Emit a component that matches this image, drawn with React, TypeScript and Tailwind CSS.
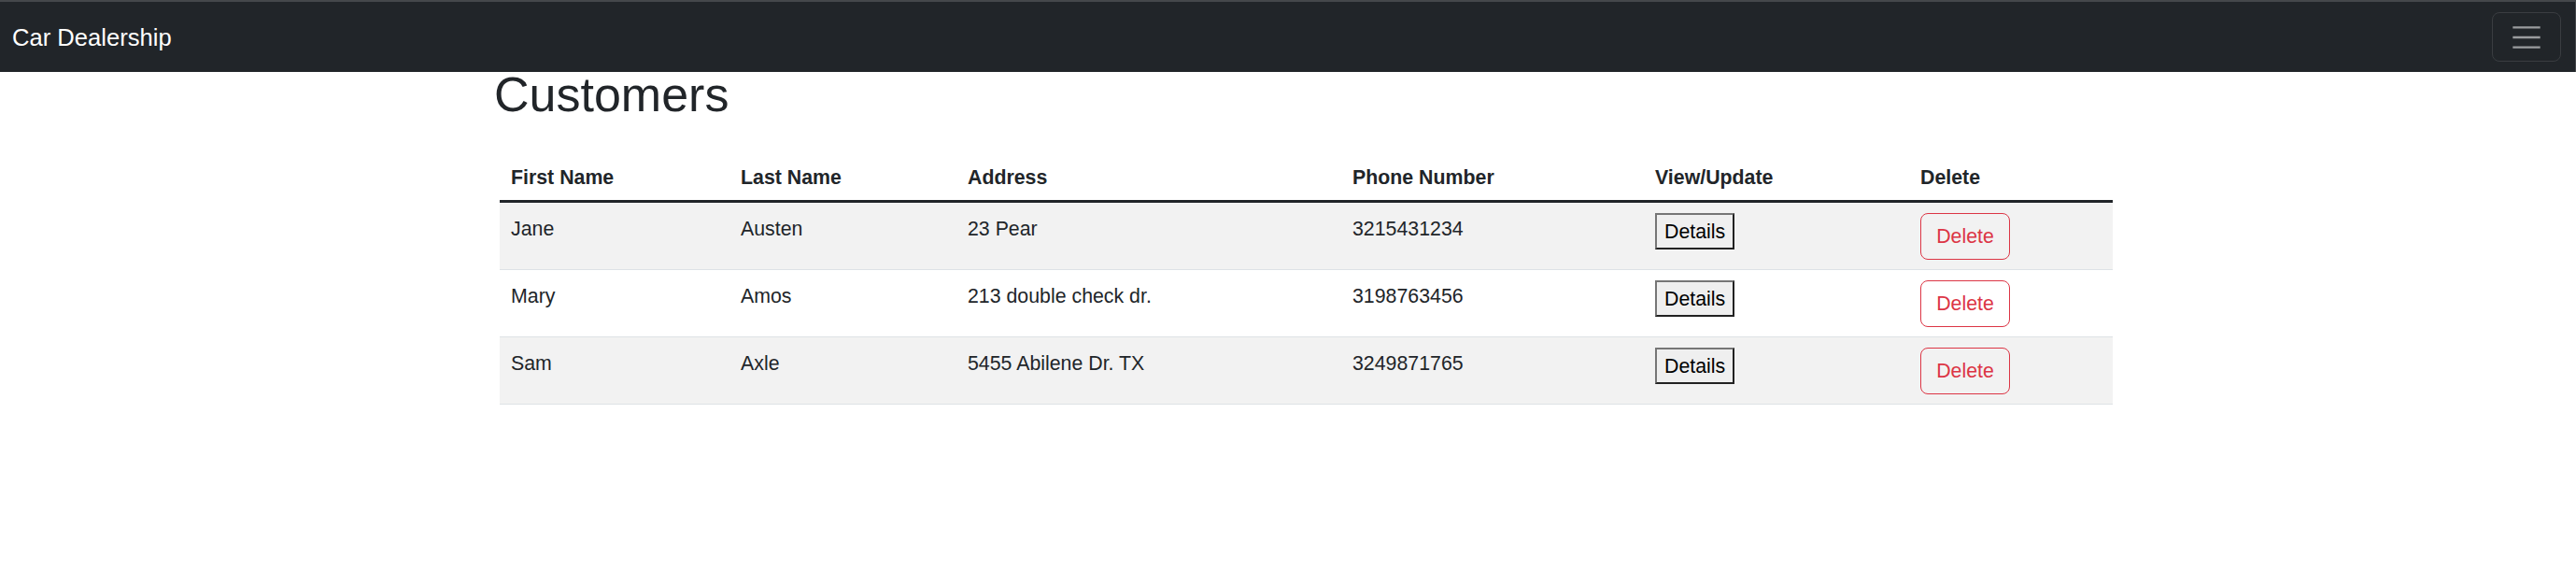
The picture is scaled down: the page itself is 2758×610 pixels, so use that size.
import React from 'react';

const customers = [
    { first: 'Jane', last: 'Austen', address: '23 Pear', phone: '3215431234' },
    { first: 'Mary', last: 'Amos', address: '213 double check dr.', phone: '3198763456' },
    { first: 'Sam', last: 'Axle', address: '5455 Abilene Dr. TX', phone: '3249871765' },
];

const cols = 'grid grid-cols-[246px_243px_412px_324px_284px_218px]';

const Navbar = () => {
    return (
        <nav className="flex h-[77px] items-center justify-between border-t-2 border-r border-[#45484b] bg-[#212529] pl-[13px] pr-[15px]">
            <span className="text-[25.6px] leading-[40px] text-white">Car Dealership</span>
            <button className="flex h-[53px] w-[74px] items-center justify-center rounded-[8px] border border-[#3a3d41]">
                <svg width="40" height="40" viewBox="0 0 30 30">
                    <path
                        d="M4 7h22M4 15h22M4 23h22"
                        stroke="rgba(255,255,255,0.55)"
                        strokeWidth="1.8"
                        strokeLinecap="butt"
                        fill="none"
                    />
                </svg>
            </button>
        </nav>
    );
};

export default function App() {
    return (
        <div className="min-h-[610px] bg-white font-['Liberation_Sans',Arial,sans-serif] text-[#212529]">
            <Navbar />
            <div className="ml-[529px] w-[1733px]">
                <h1 className="text-[52px] leading-[48px] font-normal">Customers</h1>
                <div className="ml-[6px] mt-[37px] w-[1727px] text-[21.33px]">
                    <div className={`${cols} h-[55px] border-b-[3px] border-[#212529] font-bold`}>
                        {['First Name', 'Last Name', 'Address', 'Phone Number', 'View/Update', 'Delete'].map((h) => (
                            <div key={h} className="px-[12px] pt-[11.5px] leading-[32px]">
                                {h}
                            </div>
                        ))}
                    </div>
                    {customers.map((c, i) => (
                        <div
                            key={c.first}
                            className={`${cols} h-[72px] border-b border-[#dee2e6] ${i % 2 === 0 ? 'bg-[#f2f2f2]' : 'bg-white'}`}
                        >
                            <div className="px-[12px] pt-[12px] leading-[32px]">{c.first}</div>
                            <div className="px-[12px] pt-[12px] leading-[32px]">{c.last}</div>
                            <div className="px-[12px] pt-[12px] leading-[32px]">{c.address}</div>
                            <div className="px-[12px] pt-[12px] leading-[32px]">{c.phone}</div>
                            <div className="px-[12px] pt-[11px]">
                                <button className="h-[39px] border-2 border-t-[#767676] border-l-[#767676] border-r-[#222] border-b-[#222] bg-[#efefef] px-[8px] text-[21.33px] leading-[24px] text-black">
                                    Details
                                </button>
                            </div>
                            <div className="px-[12px] pt-[11px]">
                                <button className="h-[50px] w-[96px] rounded-[8px] border-[1.3px] border-[#dc3545] text-[21.33px] leading-[32px] text-[#dc3545]">
                                    Delete
                                </button>
                            </div>
                        </div>
                    ))}
                </div>
            </div>
        </div>
    );
}
